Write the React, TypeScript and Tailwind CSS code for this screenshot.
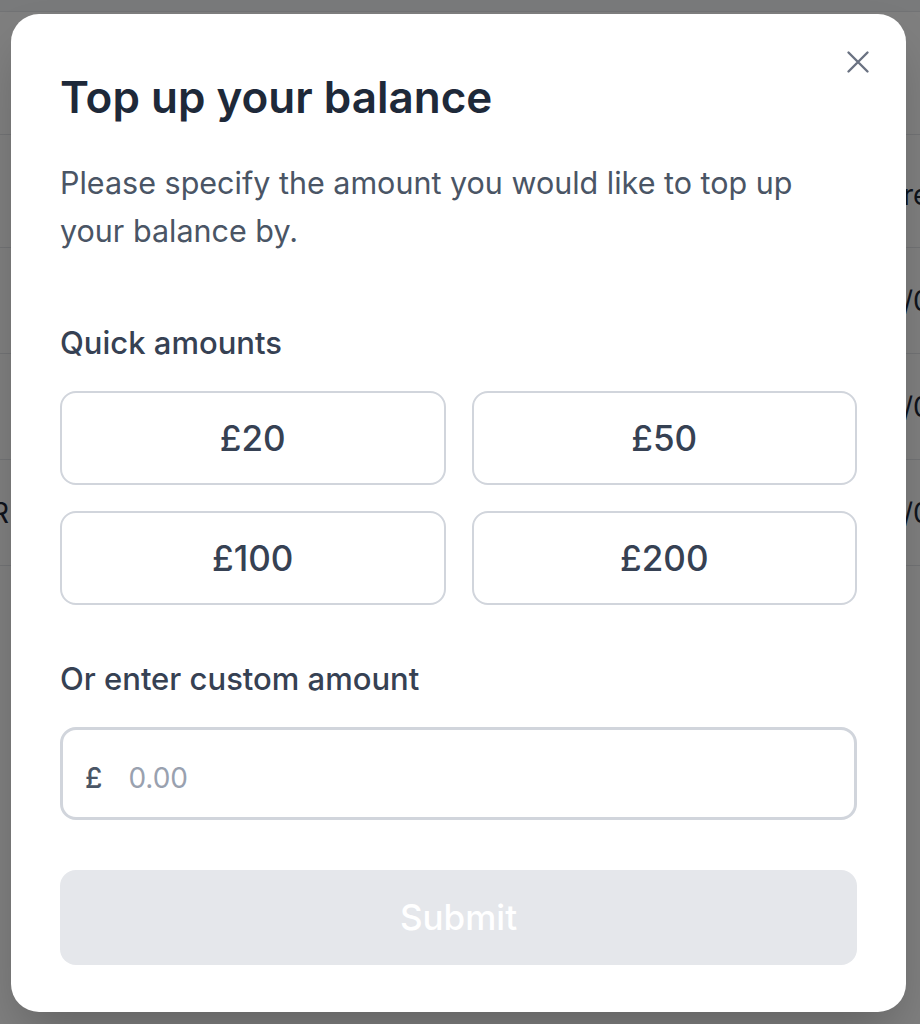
import React, { useState } from 'react';

const amounts = [20, 50, 100, 200];

const rows = [
  { left: '', right: 're', header: true },
  { left: '', right: '/0' },
  { left: '', right: '/0' },
  { left: 'R', right: '/0' },
];

export default function App() {
  const [amount, setAmount] = useState('');

  return (
    <div className="relative h-[1024px] w-[920px] overflow-hidden bg-white font-['Inter',sans-serif]">
      {/* Page behind the dialog */}
      <div className="h-[12px] border-b border-gray-200 bg-gray-100" />
      <div className="h-[123px] border-b border-gray-200" />
      {rows.map((row, i) => (
        <div
          key={i}
          className={`flex items-center justify-between border-b border-gray-200 ${
            row.header ? 'h-[113px] pt-[8px]' : 'h-[106px]'
          }`}
        >
          <div className="flex w-[9px] justify-end overflow-hidden">
            <span className="whitespace-nowrap text-[28px] text-gray-800">{row.left}</span>
          </div>
          <div className="w-[17px] overflow-hidden">
            <span className="whitespace-nowrap text-[28px] text-gray-800">{row.right}</span>
          </div>
        </div>
      ))}

      {/* Overlay */}
      <div className="absolute inset-0 bg-black/50" />

      {/* Dialog */}
      <div className="absolute left-[11px] top-[14px] h-[998px] w-[895px] rounded-[28px] bg-white shadow-2xl">
        <button className="absolute right-[24px] top-[24px] flex h-[48px] w-[48px] items-center justify-center text-gray-500">
          <svg width="24" height="24" viewBox="0 0 24 24" fill="none" stroke="currentColor" strokeWidth="2.4" strokeLinecap="round">
            <path d="M2.5 2.5L21.5 21.5M21.5 2.5L2.5 21.5" />
          </svg>
        </button>

        <div className="flex flex-col px-[49px] pt-[59px]">
          <h2 className="text-[44px] font-semibold leading-[48px] text-gray-800">
            Top up your balance
          </h2>
          <p className="mt-[38px] text-[30.5px] leading-[48px] text-gray-600">
            Please specify the amount you would like to top up your balance by.
          </p>

          <p className="mt-[68px] text-[31px] font-medium leading-[40px] text-gray-700">Quick amounts</p>
          <div className="mt-[28px] grid grid-cols-2 gap-[26px]">
            {amounts.map((a) => (
              <button
                key={a}
                onClick={() => setAmount(String(a))}
                className="flex h-[94px] items-center justify-center rounded-[16px] border-2 border-gray-300 bg-white text-[35px] font-medium text-gray-700"
              >
                £{a}
              </button>
            ))}
          </div>

          <p className="mt-[54px] text-[31px] font-medium leading-[40px] text-gray-700">Or enter custom amount</p>
          <div className="mt-[28px] flex h-[93px] items-center rounded-[16px] border-[3px] border-gray-300 px-[22px] pt-[8px]">
            <span className="text-[28px] font-medium text-gray-600">£</span>
            <input
              value={amount}
              onChange={(e) => setAmount(e.target.value)}
              placeholder="0.00"
              className="ml-[26px] w-full bg-transparent text-[28px] text-gray-700 outline-none placeholder:text-gray-400"
            />
          </div>

          <button
            disabled={!amount}
            className="mt-[50px] flex h-[95px] items-center justify-center rounded-[16px] bg-gray-200 text-[35px] font-medium text-white"
          >
            Submit
          </button>
        </div>
      </div>
    </div>
  );
}
